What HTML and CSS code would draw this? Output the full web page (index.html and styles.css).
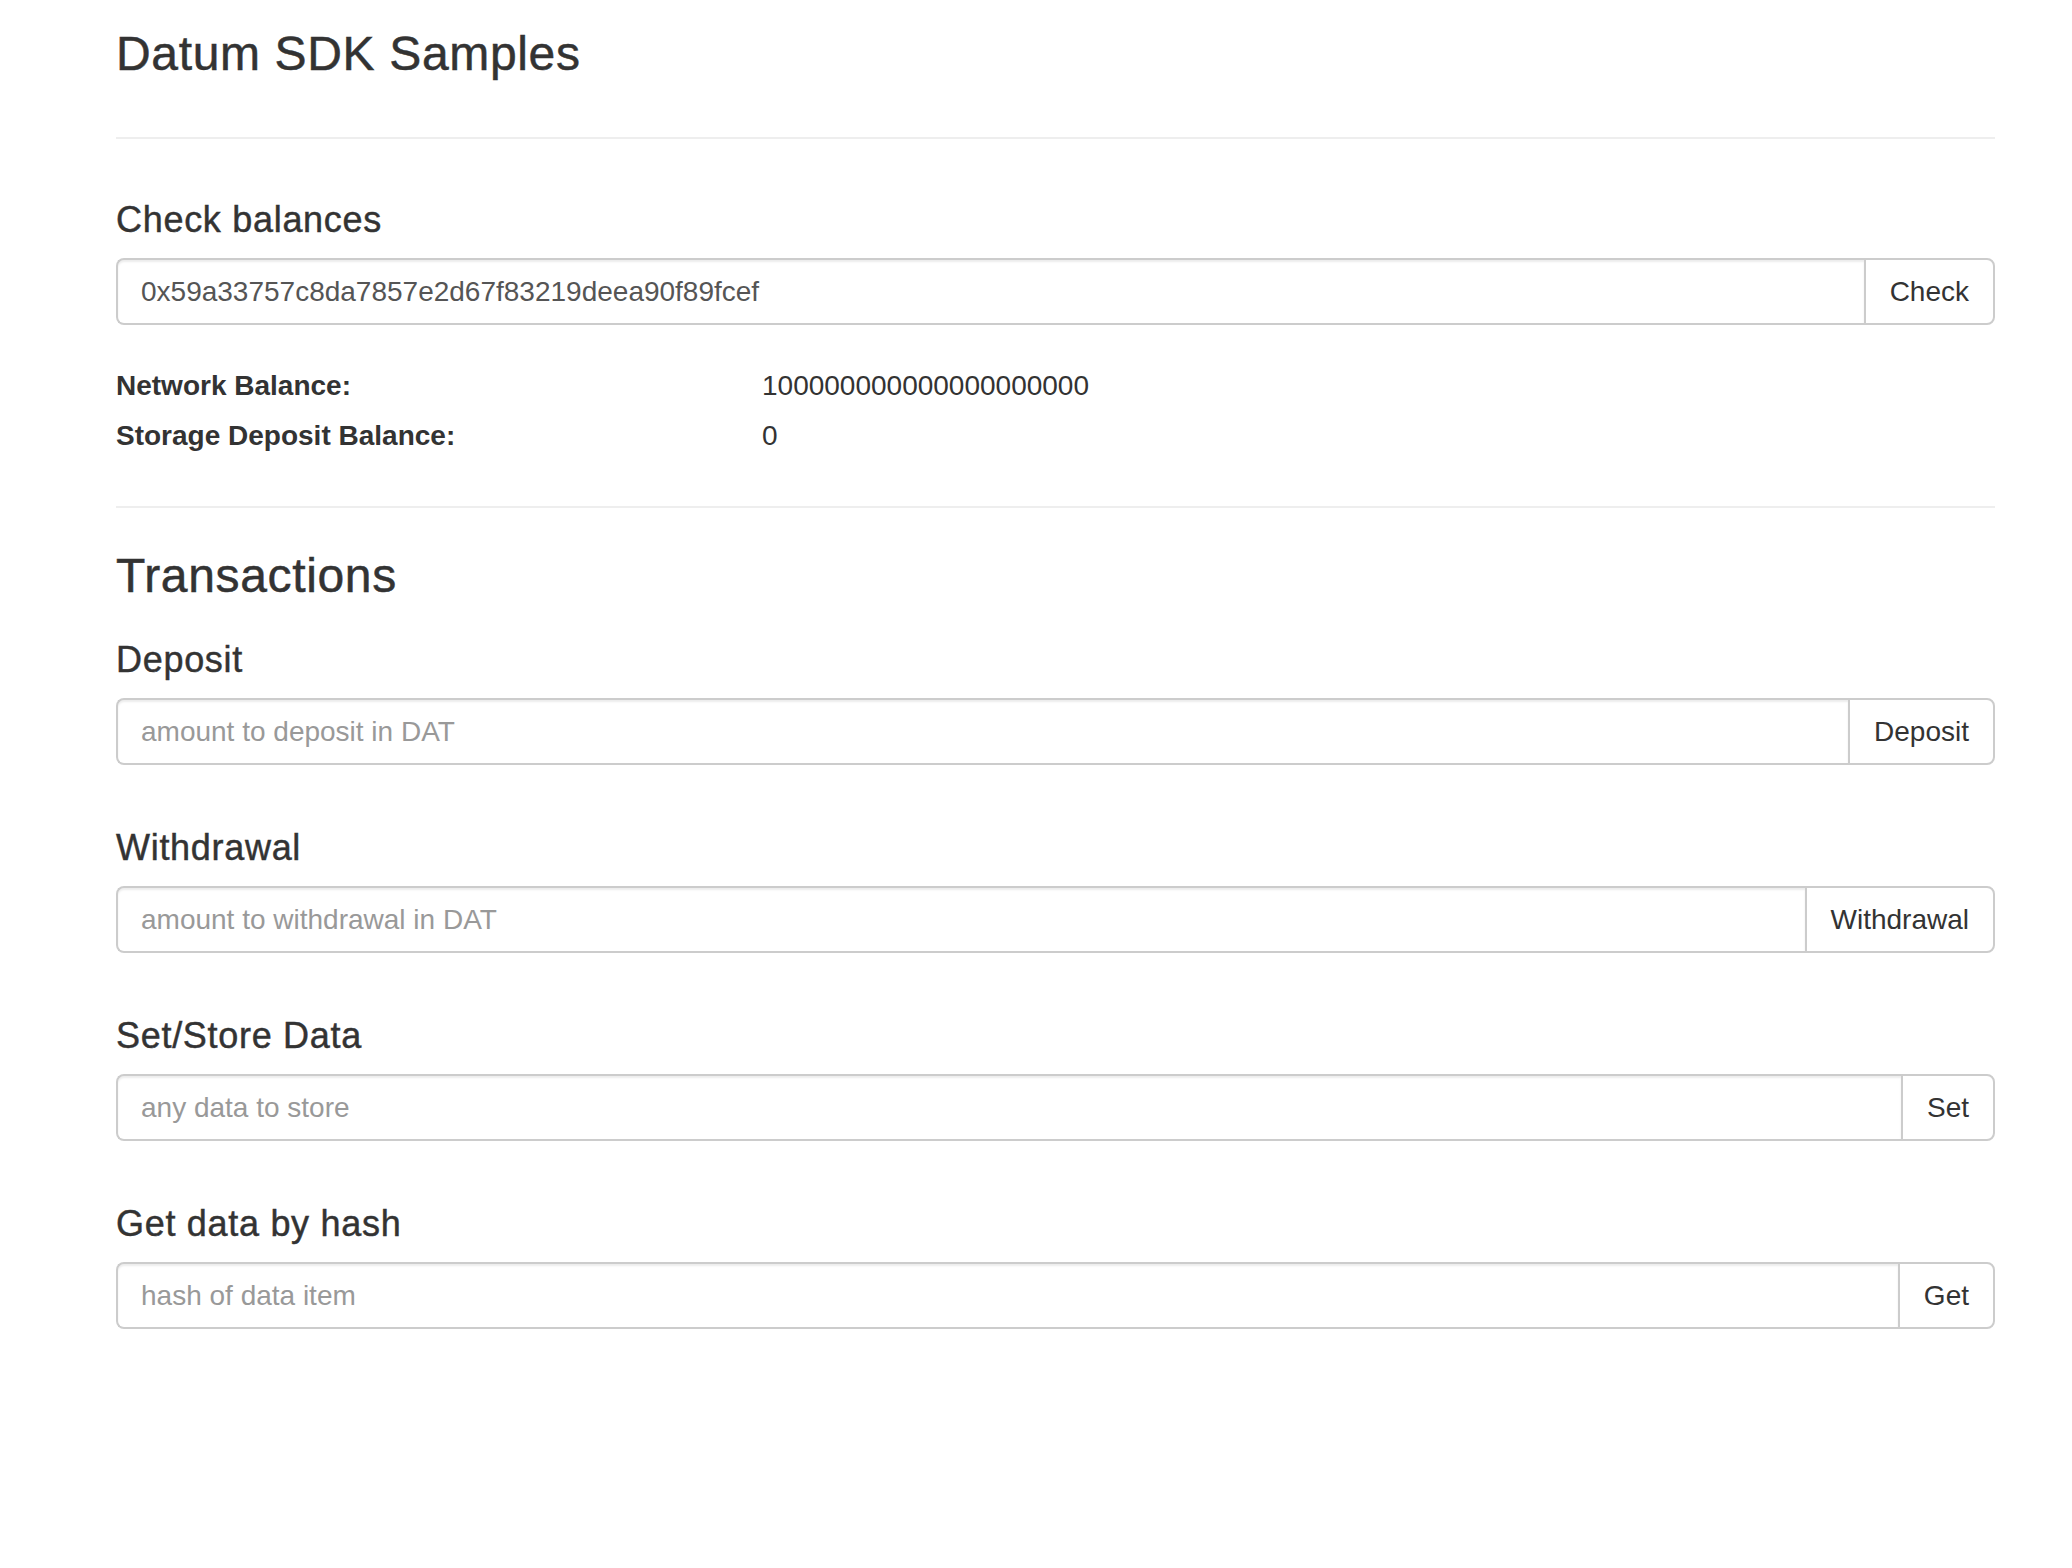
FILE: index.html
```html
<!DOCTYPE html>
<html lang="en">
<head>
<meta charset="utf-8">
<title>Datum SDK Samples</title>
<link rel="stylesheet" href="styles.css">
</head>
<body>
<div class="page">
  <h3 class="title">Datum SDK Samples</h3>
  <hr class="rule rule-top">

  <section class="balances">
    <h4 class="section-head">Check balances</h4>
    <div class="input-group">
      <input class="field" type="text" value="0x59a33757c8da7857e2d67f83219deea90f89fcef">
      <button class="btn" type="button">Check</button>
    </div>
    <div class="balance-list">
      <div class="balance-row">
        <span class="balance-label">Network Balance:</span>
        <span class="balance-value">100000000000000000000</span>
      </div>
      <div class="balance-row">
        <span class="balance-label">Storage Deposit Balance:</span>
        <span class="balance-value">0</span>
      </div>
    </div>
  </section>

  <hr class="rule rule-mid">

  <h3 class="title transactions">Transactions</h3>

  <section class="tx first">
    <h4 class="section-head">Deposit</h4>
    <div class="input-group">
      <input class="field" type="text" placeholder="amount to deposit in DAT">
      <button class="btn" type="button">Deposit</button>
    </div>
  </section>

  <section class="tx">
    <h4 class="section-head">Withdrawal</h4>
    <div class="input-group">
      <input class="field" type="text" placeholder="amount to withdrawal in DAT">
      <button class="btn" type="button">Withdrawal</button>
    </div>
  </section>

  <section class="tx">
    <h4 class="section-head">Set/Store Data</h4>
    <div class="input-group">
      <input class="field" type="text" placeholder="any data to store">
      <button class="btn" type="button">Set</button>
    </div>
  </section>

  <section class="tx">
    <h4 class="section-head">Get data by hash</h4>
    <div class="input-group">
      <input class="field" type="text" placeholder="hash of data item">
      <button class="btn" type="button">Get</button>
    </div>
  </section>
</div>
</body>
</html>
```

FILE: styles.css
```css
html, body {
  margin: 0;
  padding: 0;
  background: #ffffff;
}

body {
  font-family: "Liberation Sans", Arial, Helvetica, sans-serif;
  font-size: 28px;
  color: #333333;
}

.page {
  width: 1879px;
  margin-left: 116px;
  padding-top: 27px;
}

.title {
  margin: 0;
  font-size: 48px;
  line-height: 53px;
  font-weight: 500;
  letter-spacing: 0.65px;
  -webkit-text-stroke: 0.5px #333333;
  color: #333333;
}

.rule {
  border: 0;
  border-top: 2px solid #eeeeee;
  height: 0;
  margin: 0;
}

.rule-top {
  margin-top: 57px;
}

.balances .section-head {
  margin-top: 61px;
}

.section-head {
  margin: 0 0 18px 0;
  font-size: 36px;
  line-height: 40px;
  font-weight: 500;
  letter-spacing: 0.7px;
  -webkit-text-stroke: 0.45px #333333;
  color: #333333;
}

.input-group {
  display: flex;
  align-items: stretch;
  height: 67px;
}

.field {
  flex: 1 1 auto;
  min-width: 0;
  box-sizing: border-box;
  height: 67px;
  margin: 0;
  padding: 0 24px 0 23px;
  border: 2px solid #cccccc;
  border-right: 0;
  border-radius: 8px 0 0 8px;
  box-shadow: inset 0 2px 2px rgba(0, 0, 0, 0.075);
  font-family: "Liberation Sans", Arial, Helvetica, sans-serif;
  font-size: 28px;
  color: #555555;
  background: #ffffff;
  outline: none;
}

.field::placeholder {
  color: #999999;
  opacity: 1;
}

.btn {
  flex: 0 0 auto;
  box-sizing: border-box;
  height: 67px;
  margin: 0;
  padding: 0 24px;
  border: 2px solid #cccccc;
  border-radius: 0 8px 8px 0;
  background: #ffffff;
  font-family: "Liberation Sans", Arial, Helvetica, sans-serif;
  font-size: 28px;
  color: #333333;
  cursor: pointer;
}

.balance-list {
  margin-top: 36px;
}

.balance-row {
  display: grid;
  grid-template-columns: 646px 1fr;
  height: 50px;
  line-height: 50px;
}

.balance-label {
  font-weight: 700;
}

.balance-value {
  font-weight: 400;
}

.rule-mid {
  margin-top: 45px;
}

.transactions {
  margin-top: 41px;
}

.tx.first {
  margin-top: 38px;
}

.tx {
  margin-top: 63px;
}
```
